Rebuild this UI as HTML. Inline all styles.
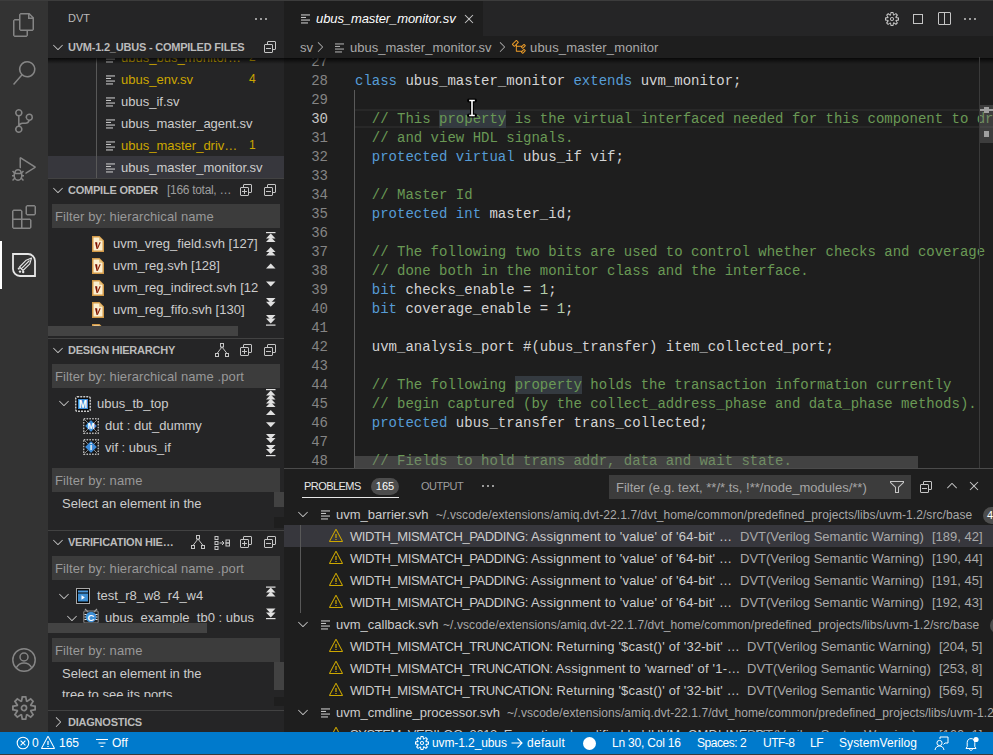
<!DOCTYPE html><html><head><meta charset="utf-8"><style>
html,body{margin:0;padding:0;width:993px;height:755px;overflow:hidden;background:#1e1e1e;}
.t{position:absolute;white-space:pre;font-family:"Liberation Sans",sans-serif;}
.b{position:absolute;}
.i{position:absolute;display:block;}
.clip{position:absolute;overflow:hidden;}
.code{position:absolute;white-space:pre;font-family:"Liberation Mono",monospace;font-size:14px;line-height:19px;height:19px;color:#d4d4d4;}
.cl{position:absolute;top:2px;left:0;white-space:pre;}
.k{color:#569cd6}.c{color:#6a9955}.n{color:#b5cea8}
</style></head><body>
<div class="b" style="left:0px;top:0px;width:993px;height:755px;background:#1e1e1e;"></div>
<div class="b" style="left:0px;top:1px;width:48px;height:731px;background:#333333;"></div>
<div class="b" style="left:48px;top:1px;width:236px;height:731px;background:#252526;"></div>
<div class="b" style="left:0px;top:0px;width:993px;height:1px;background:#3c3c3c;"></div>
<div class="b" style="left:0px;top:732px;width:993px;height:22px;background:#007acc;"></div>
<div class="b" style="left:0px;top:754px;width:993px;height:1px;background:#3a3a3a;"></div>
<svg class="i" style="left:12px;top:13px;" width="24" height="24" viewBox="0 0 24 24"><path fill="#858585" fill-rule="evenodd" d="M17.5 0h-9L7 1.5V6H2.5L1 7.5v15.07L2.5 24h12.07L16 22.57V18h4.7l1.3-1.43V4.5L17.5 0zm0 2.12l2.38 2.38H17.5V2.12zm-3 20.38h-12v-15H7v9.07L8.5 18h6v4.5zm6-6h-12v-15H16V6h4.5v10.5z"/></svg>
<svg class="i" style="left:12px;top:61px;" width="24" height="24" viewBox="0 0 24 24"><path fill="#858585" fill-rule="evenodd" d="M15.25 0a8.25 8.25 0 0 0-6.18 13.72L1 22.88l1.12 1 8.05-9.12A8.251 8.251 0 1 0 15.25.01V0zm0 15a6.75 6.75 0 1 1 0-13.5 6.75 6.75 0 0 1 0 13.5z"/></svg>
<svg class="i" style="left:12px;top:109px;" width="24" height="24" viewBox="0 0 24 24"><path fill="#858585" fill-rule="evenodd" d="M21.007 8.222A3.738 3.738 0 0 0 15.045 5.2a3.737 3.737 0 0 0 1.156 6.583 2.988 2.988 0 0 1-2.668 1.67h-2.99a4.456 4.456 0 0 0-2.989 1.165V7.4a3.737 3.737 0 1 0-1.494 0v9.117a3.776 3.776 0 1 0 1.816.099 2.99 2.99 0 0 1 2.668-1.667h2.99a4.484 4.484 0 0 0 4.223-3.039 3.736 3.736 0 0 0 3.25-3.687zM4.565 3.738a2.242 2.242 0 1 1 4.484 0 2.242 2.242 0 0 1-4.484 0zm4.484 16.441a2.242 2.242 0 1 1-4.484 0 2.242 2.242 0 0 1 4.484 0zm8.221-9.715a2.242 2.242 0 1 1 0-4.485 2.242 2.242 0 0 1 0 4.485z"/></svg>
<svg class="i" style="left:12px;top:157px;" width="24" height="24" viewBox="0 0 24 24"><path fill="#858585" fill-rule="evenodd" d="M10.94 13.5l-1.32 1.32a3.73 3.73 0 0 0-7.24 0L1.06 13.5 0 14.56l1.72 1.72-.22.22V18H0v1.5h1.5v.08c.077.489.214.966.41 1.42L0 22.94 1.06 24l1.65-1.65A4.308 4.308 0 0 0 6 24a4.31 4.31 0 0 0 3.29-1.65L10.94 24 12 22.94 10.09 21c.198-.464.336-.951.41-1.45v-.1H12V18h-1.5v-1.5l-.22-.22L12 14.56l-1.06-1.06zM6 13.5a2.25 2.25 0 0 1 2.25 2.25h-4.5A2.25 2.25 0 0 1 6 13.5zm3 6a3.33 3.33 0 0 1-3 3 3.33 3.33 0 0 1-3-3v-2.25h6v2.25zm14.76-9.9v1.26L13.5 17.37V15.6l8.5-5.37L9 2v9.46a5.07 5.07 0 0 0-1.5-.72V.63L8.64 0l15.12 9.6z"/></svg>
<svg class="i" style="left:12px;top:205px;" width="24" height="24" viewBox="0 0 24 24"><path fill="#858585" fill-rule="evenodd" d="M13.5 1.5L15 0h7.5L24 1.5V9l-1.5 1.5H15L13.5 9V1.5zm1.5 0V9h7.5V1.5H15zM0 15V6l1.5-1.5H9L10.5 6v7.5H18l1.5 1.5v7.5L18 24H1.5L0 22.5V15zm9-1.5V6H1.5v7.5H9zM9 15H1.5v7.5H9V15zm1.5 7.5H18V15h-7.5v7.5z"/></svg>
<div class="b" style="left:0px;top:241px;width:2px;height:48px;background:#ffffff;"></div>
<svg class="i" style="left:12px;top:253px;" width="24" height="24" viewBox="0 0 24 24"><path d="M1 1 H16 A7 7 0 0 1 23 8 V23 H8 A7 7 0 0 1 1 16 Z" fill="none" stroke="#e6e6e6" stroke-width="1.8"/><path d="M19.5 5 L17.8 10.8 L11 17.5 L7.5 14 L14.2 7.2 Z M17.5 7.5 L9.2 15.8" fill="none" stroke="#e6e6e6" stroke-width="1.1" stroke-linejoin="round"/><circle cx="6.8" cy="15.6" r="1.1" fill="#e6e6e6"/><circle cx="8" cy="18.6" r="1.2" fill="#e6e6e6"/><circle cx="11.2" cy="19" r="1.2" fill="#e6e6e6"/></svg>
<svg class="i" style="left:12px;top:648px;" width="24" height="24" viewBox="0 0 24 24"><circle cx="12" cy="12" r="11.2" fill="none" stroke="#858585" stroke-width="1.5"/><circle cx="12" cy="9" r="4" fill="none" stroke="#858585" stroke-width="1.5"/><path d="M4.2 19.8 C6 16.5 8.8 15 12 15 C15.2 15 18 16.5 19.8 19.8" fill="none" stroke="#858585" stroke-width="1.5"/></svg>
<svg class="i" style="left:12px;top:696px;" width="24" height="24" viewBox="0 0 24 24"><path fill="#858585" fill-rule="evenodd" d="M19.85 8.75l4.15.83v4.84l-4.15.83 2.35 3.52-3.43 3.43-3.52-2.35-.83 4.15H9.58l-.83-4.150-3.52 2.35-3.43-3.43 2.35-3.52L0 14.42V9.58l4.15-.83L1.8 5.23 5.23 1.8l3.52 2.35L9.58 0h4.84l.83 4.15 3.52-2.35 3.43 3.43-2.35 3.52zm-1.57 5.07l4-.81v-2l-4-.81-.54-1.3 2.290-3.43-1.43-1.43-3.43 2.29-1.3-.54-.81-4h-2l-.81 4-1.3.54-3.43-2.29-1.43 1.43L6.38 8.9l-.54 1.3-4 .81v2l4 .81.54 1.3-2.29 3.43 1.43 1.43 3.43-2.29 1.3.54.81 4h2l.81-4 1.3-.54 3.43 2.29 1.43-1.43-2.29-3.43.54-1.3zm-8.186-4.672A3.43 3.43 0 0 1 12 8.57 3.44 3.44 0 0 1 15.43 12a3.43 3.43 0 1 1-5.336-2.852zm.956 4.274c.281.188.612.288.95.288A1.7 1.7 0 0 0 13.71 12a1.71 1.71 0 1 0-2.66 1.422z"/></svg>
<div class="t" style="left:68px;top:7px;height:22px;line-height:22px;font-size:11px;color:#bbbbbb;">DVT</div>
<svg class="i" style="left:253px;top:11px;" width="16" height="16" viewBox="0 0 16 16"><path fill="#c5c5c5" fill-rule="evenodd" d="M4 8a1 1 0 1 1-2 0 1 1 0 0 1 2 0zm5 0a1 1 0 1 1-2 0 1 1 0 0 1 2 0zm5 0a1 1 0 1 1-2 0 1 1 0 0 1 2 0z"/></svg>
<div class="clip" style="left:48px;top:58px;width:236px;height:120px;">
<svg class="i" style="left:58px;top:-5px" width="10" height="10" viewBox="0 0 10 10"><rect x="0" y="0.4" width="9" height="1.1" fill="#c5c5c5"/><rect x="0" y="2.9" width="5" height="1.1" fill="#c5c5c5"/><rect x="0" y="5.5" width="9" height="1.1" fill="#c5c5c5"/><rect x="0" y="8.4" width="7" height="1.1" fill="#c5c5c5"/></svg>
<div class="t" style="left:73px;top:-11px;line-height:22px;font-size:13px;color:#cca700">ubus_bus_monitor…</div>
<div class="t" style="left:201px;top:-12px;line-height:22px;font-size:12px;color:#cca700">2</div>
<svg class="i" style="left:58px;top:17px" width="10" height="10" viewBox="0 0 10 10"><rect x="0" y="0.4" width="9" height="1.1" fill="#c5c5c5"/><rect x="0" y="2.9" width="5" height="1.1" fill="#c5c5c5"/><rect x="0" y="5.5" width="9" height="1.1" fill="#c5c5c5"/><rect x="0" y="8.4" width="7" height="1.1" fill="#c5c5c5"/></svg>
<div class="t" style="left:73px;top:11px;line-height:22px;font-size:13px;color:#cca700">ubus_env.sv</div>
<div class="t" style="left:201px;top:10px;line-height:22px;font-size:12px;color:#cca700">4</div>
<svg class="i" style="left:58px;top:39px" width="10" height="10" viewBox="0 0 10 10"><rect x="0" y="0.4" width="9" height="1.1" fill="#c5c5c5"/><rect x="0" y="2.9" width="5" height="1.1" fill="#c5c5c5"/><rect x="0" y="5.5" width="9" height="1.1" fill="#c5c5c5"/><rect x="0" y="8.4" width="7" height="1.1" fill="#c5c5c5"/></svg>
<div class="t" style="left:73px;top:33px;line-height:22px;font-size:13px;color:#cccccc">ubus_if.sv</div>
<svg class="i" style="left:58px;top:61px" width="10" height="10" viewBox="0 0 10 10"><rect x="0" y="0.4" width="9" height="1.1" fill="#c5c5c5"/><rect x="0" y="2.9" width="5" height="1.1" fill="#c5c5c5"/><rect x="0" y="5.5" width="9" height="1.1" fill="#c5c5c5"/><rect x="0" y="8.4" width="7" height="1.1" fill="#c5c5c5"/></svg>
<div class="t" style="left:73px;top:55px;line-height:22px;font-size:13px;color:#cccccc">ubus_master_agent.sv</div>
<svg class="i" style="left:58px;top:83px" width="10" height="10" viewBox="0 0 10 10"><rect x="0" y="0.4" width="9" height="1.1" fill="#c5c5c5"/><rect x="0" y="2.9" width="5" height="1.1" fill="#c5c5c5"/><rect x="0" y="5.5" width="9" height="1.1" fill="#c5c5c5"/><rect x="0" y="8.4" width="7" height="1.1" fill="#c5c5c5"/></svg>
<div class="t" style="left:73px;top:77px;line-height:22px;font-size:13px;color:#cca700">ubus_master_driv…</div>
<div class="t" style="left:201px;top:76px;line-height:22px;font-size:12px;color:#cca700">1</div>
<div class="b" style="left:0px;top:98px;width:236px;height:22px;background:#37373d"></div>
<svg class="i" style="left:58px;top:105px" width="10" height="10" viewBox="0 0 10 10"><rect x="0" y="0.4" width="9" height="1.1" fill="#c5c5c5"/><rect x="0" y="2.9" width="5" height="1.1" fill="#c5c5c5"/><rect x="0" y="5.5" width="9" height="1.1" fill="#c5c5c5"/><rect x="0" y="8.4" width="7" height="1.1" fill="#c5c5c5"/></svg>
<div class="t" style="left:73px;top:99px;line-height:22px;font-size:13px;color:#cccccc">ubus_master_monitor.sv</div>
<div class="b" style="left:48px;top:0px;width:1px;height:120px;background:#585858"></div>
</div>
<svg class="i" style="left:50px;top:39px;" width="16" height="16" viewBox="0 0 16 16"><path fill="#c5c5c5" fill-rule="evenodd" d="M7.976 10.072l4.357-4.357.62.618L8.284 11h-.618L3 6.333l.619-.618 4.357 4.357z"/></svg>
<div class="t" style="left:68px;top:36px;height:22px;line-height:22px;font-size:11px;color:#bbbbbb;font-weight:bold;letter-spacing:-0.22px;">UVM-1.2_UBUS - COMPILED FILES</div>
<svg class="i" style="left:262px;top:39px;" width="16" height="16" viewBox="0 0 16 16"><path fill="#c5c5c5" fill-rule="evenodd" d="M9 9H4v1h5V9z M5 3l1-1h7l1 1v7l-1 1h-2v2l-1 1H3l-1-1V6l1-1h2V3zm1 2h4l1 1v4h2V3H6v2zm4 1H3v7h7V6z"/></svg>
<div class="b" style="left:48px;top:58px;width:236px;height:6px;background:linear-gradient(#000000bb,#00000000);"></div>
<div class="b" style="left:48px;top:178px;width:236px;height:1px;background:#424242;"></div>
<svg class="i" style="left:50px;top:182px;" width="16" height="16" viewBox="0 0 16 16"><path fill="#c5c5c5" fill-rule="evenodd" d="M7.976 10.072l4.357-4.357.62.618L8.284 11h-.618L3 6.333l.619-.618 4.357 4.357z"/></svg>
<div class="t" style="left:68px;top:179px;height:22px;line-height:22px;font-size:11px;color:#bbbbbb;font-weight:bold;letter-spacing:-0.22px;">COMPILE ORDER</div>
<svg class="i" style="left:238px;top:182px;" width="16" height="16" viewBox="0 0 16 16"><path fill="#c5c5c5" fill-rule="evenodd" d="M4 9h2V7h1v2h2v1H7v2H6v-2H4V9z M5 3l1-1h7l1 1v7l-1 1h-2v2l-1 1H3l-1-1V6l1-1h2V3zm1 2h4l1 1v4h2V3H6v2zm4 1H3v7h7V6z"/></svg>
<svg class="i" style="left:262px;top:182px;" width="16" height="16" viewBox="0 0 16 16"><path fill="#c5c5c5" fill-rule="evenodd" d="M9 9H4v1h5V9z M5 3l1-1h7l1 1v7l-1 1h-2v2l-1 1H3l-1-1V6l1-1h2V3zm1 2h4l1 1v4h2V3H6v2zm4 1H3v7h7V6z"/></svg>
<div class="t" style="left:167px;top:179px;height:22px;line-height:22px;font-size:12px;color:#9d9d9d;letter-spacing:-0.3px;">[166 total, …</div>
<div class="b" style="left:52px;top:204px;width:228px;height:24px;background:#3c3c3c;"></div>
<div class="t" style="left:55px;top:205px;line-height:24px;font-size:13px;letter-spacing:0.1px;color:#999999">Filter by: hierarchical name</div>
<div class="clip" style="left:48px;top:228px;width:214px;height:99px;">
<svg class="i" style="left:43.5px;top:7.5px" width="12" height="16" viewBox="0 0 12 16"><path d="M0.75 0.75 H7.2 L11.25 4.8 V15.25 H0.75 Z" fill="#fbefd0" stroke="#d39a48" stroke-width="1.5"/><path d="M7.2 0.75 V4.8 H11.25 Z" fill="#e6c07a"/><path d="M3 6.2 H5.2 L5.6 13 H4.6 Z" fill="#7a1000"/><path d="M8.2 6.2 L5.4 12.6" stroke="#8a1a00" stroke-width="1.1"/></svg>
<div class="t" style="left:65px;top:5px;line-height:22px;font-size:13px;color:#cccccc">uvm_vreg_field.svh [127]</div>
<svg class="i" style="left:43.5px;top:29.5px" width="12" height="16" viewBox="0 0 12 16"><path d="M0.75 0.75 H7.2 L11.25 4.8 V15.25 H0.75 Z" fill="#fbefd0" stroke="#d39a48" stroke-width="1.5"/><path d="M7.2 0.75 V4.8 H11.25 Z" fill="#e6c07a"/><path d="M3 6.2 H5.2 L5.6 13 H4.6 Z" fill="#7a1000"/><path d="M8.2 6.2 L5.4 12.6" stroke="#8a1a00" stroke-width="1.1"/></svg>
<div class="t" style="left:65px;top:27px;line-height:22px;font-size:13px;color:#cccccc">uvm_reg.svh [128]</div>
<svg class="i" style="left:43.5px;top:51.5px" width="12" height="16" viewBox="0 0 12 16"><path d="M0.75 0.75 H7.2 L11.25 4.8 V15.25 H0.75 Z" fill="#fbefd0" stroke="#d39a48" stroke-width="1.5"/><path d="M7.2 0.75 V4.8 H11.25 Z" fill="#e6c07a"/><path d="M3 6.2 H5.2 L5.6 13 H4.6 Z" fill="#7a1000"/><path d="M8.2 6.2 L5.4 12.6" stroke="#8a1a00" stroke-width="1.1"/></svg>
<div class="t" style="left:65px;top:49px;line-height:22px;font-size:13px;color:#cccccc">uvm_reg_indirect.svh [12</div>
<svg class="i" style="left:43.5px;top:73.5px" width="12" height="16" viewBox="0 0 12 16"><path d="M0.75 0.75 H7.2 L11.25 4.8 V15.25 H0.75 Z" fill="#fbefd0" stroke="#d39a48" stroke-width="1.5"/><path d="M7.2 0.75 V4.8 H11.25 Z" fill="#e6c07a"/><path d="M3 6.2 H5.2 L5.6 13 H4.6 Z" fill="#7a1000"/><path d="M8.2 6.2 L5.4 12.6" stroke="#8a1a00" stroke-width="1.1"/></svg>
<div class="t" style="left:65px;top:71px;line-height:22px;font-size:13px;color:#cccccc">uvm_reg_fifo.svh [130]</div>
<svg class="i" style="left:43.5px;top:95.5px" width="12" height="16" viewBox="0 0 12 16"><path d="M0.75 0.75 H7.2 L11.25 4.8 V15.25 H0.75 Z" fill="#fbefd0" stroke="#d39a48" stroke-width="1.5"/><path d="M7.2 0.75 V4.8 H11.25 Z" fill="#e6c07a"/><path d="M3 6.2 H5.2 L5.6 13 H4.6 Z" fill="#7a1000"/><path d="M8.2 6.2 L5.4 12.6" stroke="#8a1a00" stroke-width="1.1"/></svg>
<div class="t" style="left:65px;top:93px;line-height:22px;font-size:13px;color:#cccccc">uvm_reg_file.svh [131]</div>
</div>
<svg class="i" style="left:0;top:0" width="993" height="755" viewBox="0 0 993 755"><rect x="266" y="232" width="9.5" height="1.2" fill="#e0e0e0"/><path d="M270.75 233.5 L275.5 238.5 H266 Z" fill="#e0e0e0"/><path d="M270.75 237 L275.5 242 H266 Z" fill="#e0e0e0"/><path d="M270.75 247 L275.5 252 H266 Z" fill="#e0e0e0"/><path d="M270.75 250.5 L275.5 255.5 H266 Z" fill="#e0e0e0"/><path d="M270.75 263.5 L275.5 268.5 H266 Z" fill="#e0e0e0"/><path d="M266 281.5 H275.5 L270.75 286.5 Z" fill="#e0e0e0"/><path d="M266 298 H275.5 L270.75 303 Z" fill="#e0e0e0"/><path d="M266 301.8 H275.5 L270.75 306.8 Z" fill="#e0e0e0"/><path d="M266 315 H275.5 L270.75 320 Z" fill="#e0e0e0"/><path d="M266 318.5 H275.5 L270.75 323.5 Z" fill="#e0e0e0"/><rect x="266" y="324.5" width="9.5" height="1.2" fill="#e0e0e0"/></svg>
<div class="b" style="left:48px;top:326px;width:190px;height:10px;background:#434343;"></div>
<div class="b" style="left:48px;top:338px;width:236px;height:1px;background:#424242;"></div>
<svg class="i" style="left:50px;top:342px;" width="16" height="16" viewBox="0 0 16 16"><path fill="#c5c5c5" fill-rule="evenodd" d="M7.976 10.072l4.357-4.357.62.618L8.284 11h-.618L3 6.333l.619-.618 4.357 4.357z"/></svg>
<div class="t" style="left:68px;top:339px;height:22px;line-height:22px;font-size:11px;color:#bbbbbb;font-weight:bold;letter-spacing:-0.22px;">DESIGN HIERARCHY</div>
<svg class="i" style="left:238px;top:342px;" width="16" height="16" viewBox="0 0 16 16"><path fill="#c5c5c5" fill-rule="evenodd" d="M4 9h2V7h1v2h2v1H7v2H6v-2H4V9z M5 3l1-1h7l1 1v7l-1 1h-2v2l-1 1H3l-1-1V6l1-1h2V3zm1 2h4l1 1v4h2V3H6v2zm4 1H3v7h7V6z"/></svg>
<svg class="i" style="left:262px;top:342px;" width="16" height="16" viewBox="0 0 16 16"><path fill="#c5c5c5" fill-rule="evenodd" d="M9 9H4v1h5V9z M5 3l1-1h7l1 1v7l-1 1h-2v2l-1 1H3l-1-1V6l1-1h2V3zm1 2h4l1 1v4h2V3H6v2zm4 1H3v7h7V6z"/></svg>
<svg class="i" style="left:214px;top:343px" width="16" height="16" viewBox="0 0 16 16"><rect x="6.5" y="0.5" width="3" height="3.5" fill="none" stroke="#c5c5c5" stroke-width="1"/><rect x="1.5" y="10.5" width="3" height="3" fill="none" stroke="#c5c5c5" stroke-width="1"/><rect x="11.5" y="10.5" width="3" height="3" fill="none" stroke="#c5c5c5" stroke-width="1"/><path d="M8 4 L3 10.5 M8 4 L13 10.5" stroke="#c5c5c5" stroke-width="1"/></svg>
<div class="b" style="left:52px;top:364px;width:228px;height:24px;background:#3c3c3c;"></div>
<div class="t" style="left:55px;top:365px;line-height:24px;font-size:13px;letter-spacing:0.1px;color:#999999">Filter by: hierarchical name .port</div>
<svg class="i" style="left:56px;top:395px;" width="16" height="16" viewBox="0 0 16 16"><path fill="#c5c5c5" fill-rule="evenodd" d="M7.976 10.072l4.357-4.357.62.618L8.284 11h-.618L3 6.333l.619-.618 4.357 4.357z"/></svg>
<svg class="i" style="left:75px;top:396px" width="16" height="16" viewBox="0 0 16 16"><rect x="0.75" y="0.75" width="14.5" height="14.5" rx="1.5" fill="#101010" stroke="#c8c8c8" stroke-width="1.5" stroke-dasharray="2 1"/><rect x="2.5" y="2.5" width="11" height="11" fill="#000"/><rect x="3" y="3" width="10" height="10" fill="#3d8ad6"/><text x="8" y="12" font-family="Liberation Sans" font-weight="bold" font-size="10" fill="#fff" text-anchor="middle">M</text></svg>
<div class="t" style="left:97px;top:393px;height:22px;line-height:22px;font-size:13px;color:#cccccc;">ubus_tb_top</div>
<svg class="i" style="left:83px;top:418px" width="16" height="16" viewBox="0 0 16 16"><rect x="0.75" y="0.75" width="14.5" height="14.5" fill="#151515" stroke="#b8b8b8" stroke-width="1.4" stroke-dasharray="1.6 1.2"/><path d="M2 2 L14 14 M14 2 L2 14" stroke="#8a8a8a" stroke-width="1"/><path d="M8 1.8 L14.2 8 L8 14.2 L1.8 8 Z" fill="#3d8ad6" stroke="#1a1a1a" stroke-width="0.6"/><text x="8" y="11.3" font-family="Liberation Sans" font-weight="bold" font-size="8.5" fill="#fff" text-anchor="middle">M</text></svg>
<div class="t" style="left:105px;top:415px;height:22px;line-height:22px;font-size:13px;color:#cccccc;">dut : dut_dummy</div>
<svg class="i" style="left:83px;top:439px" width="16" height="16" viewBox="0 0 16 16"><rect x="0.75" y="0.75" width="14.5" height="14.5" fill="#151515" stroke="#b8b8b8" stroke-width="1.4" stroke-dasharray="1.6 1.2"/><path d="M2 2 L14 14 M14 2 L2 14" stroke="#8a8a8a" stroke-width="1"/><path d="M8 1.8 L14.2 8 L8 14.2 L1.8 8 Z" fill="#3d8ad6" stroke="#1a1a1a" stroke-width="0.6"/><text x="8" y="11.3" font-family="Liberation Sans" font-weight="bold" font-size="8.5" fill="#fff" text-anchor="middle">i</text></svg>
<div class="t" style="left:105px;top:437px;height:22px;line-height:22px;font-size:13px;color:#cccccc;">vif : ubus_if</div>
<svg class="i" style="left:0;top:0" width="993" height="755" viewBox="0 0 993 755"><rect x="266" y="389" width="9.5" height="1.2" fill="#e0e0e0"/><path d="M270.75 390.5 L275.5 395.5 H266 Z" fill="#e0e0e0"/><path d="M270.75 394.5 L275.5 399.5 H266 Z" fill="#e0e0e0"/><path d="M270.75 398.5 L275.5 403.5 H266 Z" fill="#e0e0e0"/><path d="M270.75 402 L275.5 407 H266 Z" fill="#e0e0e0"/><path d="M270.75 410 L275.5 415 H266 Z" fill="#e0e0e0"/><path d="M266 422.2 H275.5 L270.75 427.2 Z" fill="#e0e0e0"/><path d="M266 434 H275.5 L270.75 439 Z" fill="#e0e0e0"/><path d="M266 438 H275.5 L270.75 443 Z" fill="#e0e0e0"/><path d="M266 445 H275.5 L270.75 450 Z" fill="#e0e0e0"/><path d="M266 449 H275.5 L270.75 454 Z" fill="#e0e0e0"/><rect x="266" y="455" width="9.5" height="1.2" fill="#e0e0e0"/></svg>
<div class="b" style="left:52px;top:468px;width:228px;height:24px;background:#3c3c3c;"></div>
<div class="t" style="left:55px;top:469px;line-height:24px;font-size:13px;letter-spacing:0.1px;color:#999999">Filter by: name</div>
<div class="clip" style="left:48px;top:492px;width:226px;height:24px;">
<div class="t" style="left:14px;top:1px;height:22px;line-height:22px;font-size:13px;color:#cccccc;">Select an element in the</div>
<div class="t" style="left:14px;top:23px;height:23px;line-height:23px;font-size:13px;color:#cccccc;">tree to see its ports</div>
</div>
<div class="b" style="left:274px;top:492px;width:10px;height:15px;background:#424242;"></div>
<div class="b" style="left:274px;top:517px;width:10px;height:11px;background:#1e1e1e;"></div>
<div class="b" style="left:48px;top:530px;width:236px;height:1px;background:#424242;"></div>
<svg class="i" style="left:50px;top:534px;" width="16" height="16" viewBox="0 0 16 16"><path fill="#c5c5c5" fill-rule="evenodd" d="M7.976 10.072l4.357-4.357.62.618L8.284 11h-.618L3 6.333l.619-.618 4.357 4.357z"/></svg>
<div class="t" style="left:68px;top:531px;height:22px;line-height:22px;font-size:11px;color:#bbbbbb;font-weight:bold;letter-spacing:-0.22px;">VERIFICATION HIE…</div>
<svg class="i" style="left:238px;top:534px;" width="16" height="16" viewBox="0 0 16 16"><path fill="#c5c5c5" fill-rule="evenodd" d="M4 9h2V7h1v2h2v1H7v2H6v-2H4V9z M5 3l1-1h7l1 1v7l-1 1h-2v2l-1 1H3l-1-1V6l1-1h2V3zm1 2h4l1 1v4h2V3H6v2zm4 1H3v7h7V6z"/></svg>
<svg class="i" style="left:262px;top:534px;" width="16" height="16" viewBox="0 0 16 16"><path fill="#c5c5c5" fill-rule="evenodd" d="M9 9H4v1h5V9z M5 3l1-1h7l1 1v7l-1 1h-2v2l-1 1H3l-1-1V6l1-1h2V3zm1 2h4l1 1v4h2V3H6v2zm4 1H3v7h7V6z"/></svg>
<svg class="i" style="left:190px;top:535px" width="16" height="16" viewBox="0 0 16 16"><rect x="6.5" y="0.5" width="3" height="3.5" fill="none" stroke="#c5c5c5" stroke-width="1"/><rect x="1.5" y="10.5" width="3" height="3" fill="none" stroke="#c5c5c5" stroke-width="1"/><rect x="11.5" y="10.5" width="3" height="3" fill="none" stroke="#c5c5c5" stroke-width="1"/><path d="M8 4 L3 10.5 M8 4 L13 10.5" stroke="#c5c5c5" stroke-width="1"/></svg>
<svg class="i" style="left:214px;top:535px" width="17" height="16" viewBox="0 0 17 16"><rect x="1" y="1.5" width="3" height="3" fill="none" stroke="#c5c5c5"/><rect x="1" y="6.5" width="3" height="3" fill="none" stroke="#c5c5c5"/><rect x="1" y="11.5" width="3" height="3" fill="none" stroke="#c5c5c5"/><path d="M5.5 8 H10 M8 6 L10 8 L8 10" fill="none" stroke="#c5c5c5"/><rect x="12" y="5" width="3.5" height="3" fill="none" stroke="#c5c5c5"/><rect x="12" y="8" width="3.5" height="3" fill="none" stroke="#c5c5c5"/></svg>
<div class="b" style="left:52px;top:556px;width:228px;height:24px;background:#3c3c3c;"></div>
<div class="t" style="left:55px;top:557px;line-height:24px;font-size:13px;letter-spacing:0.1px;color:#999999">Filter by: hierarchical name .port</div>
<div class="clip" style="left:48px;top:580px;width:236px;height:46px;">
<svg class="i" style="left:8px;top:8px" width="16" height="16" viewBox="0 0 16 16"><path fill="#c5c5c5" d="M7.976 10.072l4.357-4.357.62.618L8.284 11h-.618L3 6.333l.619-.618 4.357 4.357z"/></svg>
<svg class="i" style="left:28px;top:8px" width="14" height="16" viewBox="0 0 14 16"><rect x="0.5" y="0.5" width="13" height="15" fill="#050505" stroke="#a8a8a8"/><rect x="2" y="2.5" width="10" height="2" fill="#4a98dc"/><rect x="2" y="5.5" width="10" height="8" fill="#3f8fd2"/><path d="M5.5 7.3 L8.8 9.5 L5.5 11.7 Z" fill="#fff"/></svg>
<div class="t" style="left:49px;top:5px;height:22px;line-height:22px;font-size:13px;color:#cccccc;">test_r8_w8_r4_w4</div>
<svg class="i" style="left:16px;top:30px" width="16" height="16" viewBox="0 0 16 16"><path fill="#c5c5c5" d="M7.976 10.072l4.357-4.357.62.618L8.284 11h-.618L3 6.333l.619-.618 4.357 4.357z"/></svg>
<svg class="i" style="left:35px;top:28px" width="16" height="16" viewBox="0 0 16 16"><path d="M2 1 L5 4 M14 1 L11 4" stroke="#a0a0a0" stroke-width="1.2"/><rect x="0.8" y="3" width="14.4" height="12" rx="1" fill="none" stroke="#8a8a8a" stroke-width="1"/><path d="M1.5 6.5 H4 M1.5 9 H4 M1.5 11.5 H4 M12 6.5 H14.5 M12 9 H14.5 M12 11.5 H14.5" stroke="#e8e8e8" stroke-width="1"/><circle cx="8" cy="9" r="5.3" fill="#3d8fd6"/><text x="8" y="12.6" font-family="Liberation Sans" font-weight="bold" font-size="9.5" fill="#fff" text-anchor="middle">C</text></svg>
<div class="t" style="left:57px;top:27px;height:22px;line-height:22px;font-size:13px;color:#cccccc;">ubus_example_tb0 : ubus</div>
</div>
<svg class="i" style="left:0;top:0" width="993" height="755" viewBox="0 0 993 755"><rect x="266" y="586.5" width="9.5" height="1.2" fill="#e0e0e0"/><path d="M270.75 587.5 L275.5 592.5 H266 Z" fill="#e0e0e0"/><path d="M270.75 591.5 L275.5 596.5 H266 Z" fill="#e0e0e0"/><path d="M266 608.5 H275.5 L270.75 613.5 Z" fill="#e0e0e0"/><path d="M266 612.5 H275.5 L270.75 617.5 Z" fill="#e0e0e0"/><rect x="266" y="618" width="9.5" height="1.2" fill="#e0e0e0"/></svg>
<div class="b" style="left:48px;top:623px;width:159px;height:10px;background:#434343;"></div>
<div class="b" style="left:52px;top:638px;width:228px;height:24px;background:#3c3c3c;"></div>
<div class="t" style="left:55px;top:639px;line-height:24px;font-size:13px;letter-spacing:0.1px;color:#999999">Filter by: name</div>
<div class="clip" style="left:48px;top:662px;width:226px;height:35px;">
<div class="t" style="left:14px;top:1px;height:22px;line-height:22px;font-size:13px;color:#cccccc;">Select an element in the</div>
<div class="t" style="left:14px;top:22px;height:22px;line-height:22px;font-size:13px;color:#cccccc;">tree to see its ports</div>
</div>
<div class="b" style="left:274px;top:662px;width:10px;height:28px;background:#424242;"></div>
<div class="b" style="left:274px;top:697px;width:10px;height:9px;background:#1e1e1e;"></div>
<div class="b" style="left:48px;top:710px;width:236px;height:1px;background:#424242;"></div>
<svg class="i" style="left:50px;top:714px;" width="16" height="16" viewBox="0 0 16 16"><path fill="#c5c5c5" fill-rule="evenodd" d="M10.072 8.024L5.715 3.667l.618-.62L11 7.716v.618L6.333 13l-.618-.619 4.357-4.357z"/></svg>
<div class="t" style="left:68px;top:711px;height:22px;line-height:22px;font-size:11px;color:#bbbbbb;font-weight:bold;letter-spacing:-0.22px;">DIAGNOSTICS</div>
<div class="b" style="left:284px;top:1px;width:709px;height:35px;background:#252526;"></div>
<div class="b" style="left:284px;top:1px;width:199px;height:35px;background:#1e1e1e;"></div>
<svg class="i" style="left:301px;top:14px" width="10" height="10" viewBox="0 0 10 10"><rect x="0" y="0.4" width="9" height="1.1" fill="#c5c5c5"/><rect x="0" y="2.9" width="5" height="1.1" fill="#c5c5c5"/><rect x="0" y="5.5" width="9" height="1.1" fill="#c5c5c5"/><rect x="0" y="8.4" width="7" height="1.1" fill="#c5c5c5"/></svg>
<div class="t" style="left:316px;top:8px;height:22px;line-height:22px;font-size:13px;color:#ffffff;font-style:italic;letter-spacing:-0.1px;">ubus_master_monitor.sv</div>
<svg class="i" style="left:461px;top:11px;" width="16" height="16" viewBox="0 0 16 16"><path fill="#c5c5c5" fill-rule="evenodd" d="M8 8.707l3.646 3.647.708-.707L8.707 8l3.647-3.646-.707-.708L8 7.293 4.354 3.646l-.707.708L7.293 8l-3.646 3.646.707.708L8 8.707z"/></svg>
<svg class="i" style="left:884px;top:11px;" width="16" height="16" viewBox="0 0 16 16"><path fill="#c5c5c5" fill-rule="evenodd" d="M9.1 4.4L8.6 2H7.4l-.5 2.4-.7.3-2-1.3-.9.8 1.3 2-.2.7-2.4.5v1.2l2.4.5.3.8-1.3 2 .8.8 2-1.3.8.3.4 2.3h1.2l.5-2.4.8-.3 2 1.3.8-.8-1.3-2 .3-.8 2.3-.4V7.4l-2.4-.5-.3-.8 1.3-2-.8-.8-2 1.3-.7-.2zM9.4 1l.5 2.4L12 2.1l2 2-1.4 2.1 2.4.4v2.8l-2.4.5L14 12l-2 2-2.1-1.4-.5 2.4H6.6l-.5-2.4L4 13.9l-2-2 1.4-2.1L1 9.4V6.6l2.4-.5L2.1 4l2-2 2.1 1.4.4-2.4h2.8zm.6 7c0 1.1-.9 2-2 2s-2-.9-2-2 .9-2 2-2 2 .9 2 2zM8 9c.6 0 1-.4 1-1s-.4-1-1-1-1 .4-1 1 .4 1 1 1z"/></svg>
<svg class="i" style="left:910px;top:11px" width="16" height="16" viewBox="0 0 16 16"><rect x="3.5" y="3.5" width="9" height="9" fill="none" stroke="#c5c5c5" stroke-width="1"/></svg>
<svg class="i" style="left:936px;top:11px;" width="16" height="16" viewBox="0 0 16 16"><path fill="#c5c5c5" fill-rule="evenodd" d="M14 1H3L2 2v11l1 1h11l1-1V2l-1-1zM8 13H3V2h5v11zm6 0H9V2h5v11z"/></svg>
<svg class="i" style="left:962px;top:11px;" width="16" height="16" viewBox="0 0 16 16"><path fill="#c5c5c5" fill-rule="evenodd" d="M4 8a1 1 0 1 1-2 0 1 1 0 0 1 2 0zm5 0a1 1 0 1 1-2 0 1 1 0 0 1 2 0zm5 0a1 1 0 1 1-2 0 1 1 0 0 1 2 0z"/></svg>
<div class="b" style="left:284px;top:36px;width:709px;height:22px;background:#1e1e1e;"></div>
<div class="t" style="left:300px;top:37px;height:22px;line-height:22px;font-size:13px;color:#a9a9a9;">sv</div>
<svg class="i" style="left:312px;top:39px;" width="16" height="16" viewBox="0 0 16 16"><path fill="#a9a9a9" fill-rule="evenodd" d="M10.072 8.024L5.715 3.667l.618-.62L11 7.716v.618L6.333 13l-.618-.619 4.357-4.357z"/></svg>
<svg class="i" style="left:335px;top:43px" width="10" height="10" viewBox="0 0 10 10"><rect x="0" y="0.4" width="9" height="1.1" fill="#a9a9a9"/><rect x="0" y="2.9" width="5" height="1.1" fill="#a9a9a9"/><rect x="0" y="5.5" width="9" height="1.1" fill="#a9a9a9"/><rect x="0" y="8.4" width="7" height="1.1" fill="#a9a9a9"/></svg>
<div class="t" style="left:350px;top:37px;height:22px;line-height:22px;font-size:13px;color:#a9a9a9;">ubus_master_monitor.sv</div>
<svg class="i" style="left:494px;top:39px;" width="16" height="16" viewBox="0 0 16 16"><path fill="#a9a9a9" fill-rule="evenodd" d="M10.072 8.024L5.715 3.667l.618-.62L11 7.716v.618L6.333 13l-.618-.619 4.357-4.357z"/></svg>
<svg class="i" style="left:511px;top:39px;" width="16" height="15" viewBox="0 0 16 15"><path fill="#ee9d28" fill-rule="evenodd" d="M11.34 9.71h.71l2.67-2.67v-.71L13.38 5h-.7l-1.82 1.81h-5V5.56l1.86-1.85V3l-2-2H5L1 5v.71l2 2h.71l1.14-1.15v5.79l.5.5H10v.52l1.33 1.34h.71l2.67-2.67v-.71L13.37 10h-.7l-1.860 1.85h-5v-4H10v.48l1.34 1.38zm1.69-3.65l.63.63-2 2-.63-.63 2-2zm0 5l.63.63-2 2-.63-.63 2-2zM3.35 6.65L2.06 5.29l3.29-3.29 1.29 1.29-3.29 3.36z"/></svg>
<div class="t" style="left:530px;top:37px;height:22px;line-height:22px;font-size:13px;color:#a9a9a9;letter-spacing:0.15px;">ubus_master_monitor</div>
<div class="clip" style="left:284px;top:58px;width:709px;height:410px;">
<div class="b" style="left:71px;top:51px;width:638px;height:19px;box-sizing:border-box;border-top:2px solid #282828;border-bottom:2px solid #282828"></div>
<div class="b" style="left:155.0px;top:52px;width:67.2px;height:18px;background:#343a40"></div>
<div class="b" style="left:230.6px;top:318px;width:67.2px;height:18px;background:#343a40"></div>
<div class="b" style="left:70px;top:32px;width:1px;height:378px;background:#5a5a5a"></div>
<div class="code" style="left:0px;width:44px;top:-5px;text-align:right;color:#858585">27</div>
<div class="code" style="left:71px;top:-5px"></div>
<div class="code" style="left:0px;width:44px;top:14px;text-align:right;color:#858585">28</div>
<div class="code" style="left:71px;top:14px"><span class="k">class</span> ubus_master_monitor <span class="k">extends</span> uvm_monitor;</div>
<div class="code" style="left:0px;width:44px;top:33px;text-align:right;color:#858585">29</div>
<div class="code" style="left:71px;top:33px"></div>
<div class="code" style="left:0px;width:44px;top:52px;text-align:right;color:#c6c6c6">30</div>
<div class="code" style="left:71px;top:52px">  <span class="c">// This property is the virtual interfaced needed for this component to drive</span></div>
<div class="code" style="left:0px;width:44px;top:71px;text-align:right;color:#858585">31</div>
<div class="code" style="left:71px;top:71px">  <span class="c">// and view HDL signals.</span></div>
<div class="code" style="left:0px;width:44px;top:90px;text-align:right;color:#858585">32</div>
<div class="code" style="left:71px;top:90px">  <span class="k">protected</span> <span class="k">virtual</span> ubus_if vif;</div>
<div class="code" style="left:0px;width:44px;top:109px;text-align:right;color:#858585">33</div>
<div class="code" style="left:71px;top:109px"></div>
<div class="code" style="left:0px;width:44px;top:128px;text-align:right;color:#858585">34</div>
<div class="code" style="left:71px;top:128px">  <span class="c">// Master Id</span></div>
<div class="code" style="left:0px;width:44px;top:147px;text-align:right;color:#858585">35</div>
<div class="code" style="left:71px;top:147px">  <span class="k">protected</span> <span class="k">int</span> master_id;</div>
<div class="code" style="left:0px;width:44px;top:166px;text-align:right;color:#858585">36</div>
<div class="code" style="left:71px;top:166px"></div>
<div class="code" style="left:0px;width:44px;top:185px;text-align:right;color:#858585">37</div>
<div class="code" style="left:71px;top:185px">  <span class="c">// The following two bits are used to control whether checks and coverage are</span></div>
<div class="code" style="left:0px;width:44px;top:204px;text-align:right;color:#858585">38</div>
<div class="code" style="left:71px;top:204px">  <span class="c">// done both in the monitor class and the interface.</span></div>
<div class="code" style="left:0px;width:44px;top:223px;text-align:right;color:#858585">39</div>
<div class="code" style="left:71px;top:223px">  <span class="k">bit</span> checks_enable = <span class="n">1</span>;</div>
<div class="code" style="left:0px;width:44px;top:242px;text-align:right;color:#858585">40</div>
<div class="code" style="left:71px;top:242px">  <span class="k">bit</span> coverage_enable = <span class="n">1</span>;</div>
<div class="code" style="left:0px;width:44px;top:261px;text-align:right;color:#858585">41</div>
<div class="code" style="left:71px;top:261px"></div>
<div class="code" style="left:0px;width:44px;top:280px;text-align:right;color:#858585">42</div>
<div class="code" style="left:71px;top:280px">  uvm_analysis_port #(ubus_transfer) item_collected_port;</div>
<div class="code" style="left:0px;width:44px;top:299px;text-align:right;color:#858585">43</div>
<div class="code" style="left:71px;top:299px"></div>
<div class="code" style="left:0px;width:44px;top:318px;text-align:right;color:#858585">44</div>
<div class="code" style="left:71px;top:318px">  <span class="c">// The following property holds the transaction information currently</span></div>
<div class="code" style="left:0px;width:44px;top:337px;text-align:right;color:#858585">45</div>
<div class="code" style="left:71px;top:337px">  <span class="c">// begin captured (by the collect_address_phase and data_phase methods).</span></div>
<div class="code" style="left:0px;width:44px;top:356px;text-align:right;color:#858585">46</div>
<div class="code" style="left:71px;top:356px">  <span class="k">protected</span> ubus_transfer trans_collected;</div>
<div class="code" style="left:0px;width:44px;top:375px;text-align:right;color:#858585">47</div>
<div class="code" style="left:71px;top:375px"></div>
<div class="code" style="left:0px;width:44px;top:394px;text-align:right;color:#858585">48</div>
<div class="code" style="left:71px;top:394px">  <span class="c">// Fields to hold trans addr, data and wait state.</span></div>
</div>
<div class="b" style="left:284px;top:58px;width:709px;height:6px;background:linear-gradient(#000000bb,#00000000);"></div>
<div class="b" style="left:979px;top:57px;width:1px;height:411px;background:#3a3a3a;"></div>
<div class="b" style="left:980px;top:105px;width:13px;height:38px;background:rgba(121,121,121,0.35);"></div>
<div class="b" style="left:980px;top:109px;width:13px;height:2px;background:#a0a0a0;"></div>
<div class="b" style="left:984px;top:107px;width:5px;height:6px;background:#a0a0a0;"></div>
<div class="b" style="left:984px;top:131px;width:5px;height:6px;background:#a0a0a0;"></div>
<div class="b" style="left:355px;top:456px;width:563px;height:12px;background:rgba(121,121,121,0.4);"></div>
<svg class="i" style="left:466px;top:97px" width="12" height="22" viewBox="0 0 12 22"><path d="M3 3.5 H9 M6 3.5 V18.5 M3 18.5 H9" stroke="#000" stroke-width="4" stroke-linecap="round" fill="none"/><path d="M3.2 3.5 H8.8 M6 3.5 V18.5 M3.2 18.5 H8.8" stroke="#fff" stroke-width="1.6" fill="none"/></svg>
<div class="b" style="left:284px;top:468px;width:709px;height:1px;background:#4b4b4b;"></div>
<div class="t" style="left:304px;top:475px;height:22px;line-height:22px;font-size:11px;color:#e7e7e7;letter-spacing:-0.55px;">PROBLEMS</div>
<div class="b" style="left:371px;top:478px;width:28px;height:17px;border-radius:9px;background:#4d4d4d"></div>
<div class="t" style="left:371px;top:478px;height:17px;line-height:17px;font-size:11px;color:#ffffff;width:28px;text-align:center;">165</div>
<div class="b" style="left:302px;top:497px;width:97px;height:1px;background:#e7e7e7;"></div>
<div class="t" style="left:421px;top:475px;height:22px;line-height:22px;font-size:11px;color:#9d9d9d;letter-spacing:-0.5px;">OUTPUT</div>
<svg class="i" style="left:480px;top:478px;" width="16" height="16" viewBox="0 0 16 16"><path fill="#c5c5c5" fill-rule="evenodd" d="M4 8a1 1 0 1 1-2 0 1 1 0 0 1 2 0zm5 0a1 1 0 1 1-2 0 1 1 0 0 1 2 0zm5 0a1 1 0 1 1-2 0 1 1 0 0 1 2 0z"/></svg>
<div class="b" style="left:609px;top:475px;width:302px;height:24px;background:#3c3c3c;"></div>
<div class="t" style="left:616px;top:476px;height:24px;line-height:24px;font-size:13px;color:#a6a6a6;">Filter (e.g. text, **/*.ts, !**/node_modules/**)</div>
<svg class="i" style="left:889px;top:479px;" width="16" height="16" viewBox="0 0 16 16"><path fill="#c5c5c5" fill-rule="evenodd" d="M15 2v1.67l-5 4.759V14H6V8.429l-5-4.76V2h14zM7 8v5h2V8l5-4.76V3H2v.24L7 8z"/></svg>
<svg class="i" style="left:918px;top:479px;" width="16" height="16" viewBox="0 0 16 16"><path fill="#c5c5c5" fill-rule="evenodd" d="M9 9H4v1h5V9z M5 3l1-1h7l1 1v7l-1 1h-2v2l-1 1H3l-1-1V6l1-1h2V3zm1 2h4l1 1v4h2V3H6v2zm4 1H3v7h7V6z"/></svg>
<svg class="i" style="left:944px;top:478px;" width="16" height="16" viewBox="0 0 16 16"><path fill="#c5c5c5" fill-rule="evenodd" d="M8 6.04l-4.37 4.37-.62-.62L7.69 5.1h.62l4.69 4.69-.62.62L8 6.04z"/></svg>
<svg class="i" style="left:966px;top:478px;" width="16" height="16" viewBox="0 0 16 16"><path fill="#c5c5c5" fill-rule="evenodd" d="M8 8.707l3.646 3.647.708-.707L8.707 8l3.647-3.646-.707-.708L8 7.293 4.354 3.646l-.707.708L7.293 8l-3.646 3.646.707.708L8 8.707z"/></svg>
<div class="clip" style="left:284px;top:503px;width:709px;height:229px;">
<svg class="i" style="left:11px;top:3px" width="16" height="16" viewBox="0 0 16 16"><path fill="#c5c5c5" d="M7.976 10.072l4.357-4.357.62.618L8.284 11h-.618L3 6.333l.619-.618 4.357 4.357z"/></svg>
<svg class="i" style="left:37px;top:7px" width="10" height="10" viewBox="0 0 10 10"><rect x="0" y="0.4" width="9" height="1.1" fill="#c5c5c5"/><rect x="0" y="2.9" width="5" height="1.1" fill="#c5c5c5"/><rect x="0" y="5.5" width="9" height="1.1" fill="#c5c5c5"/><rect x="0" y="8.4" width="7" height="1.1" fill="#c5c5c5"/></svg>
<div class="t" style="left:52px;top:1px;line-height:22px;font-size:13px;color:#cccccc">uvm_barrier.svh</div>
<div class="t" style="left:152px;top:1px;line-height:22px;font-size:12px;letter-spacing:0.075px;color:#a9a9a9">~/.vscode/extensions/amiq.dvt-22.1.7/dvt_home/common/predefined_projects/libs/uvm-1.2/src/base</div>
<div class="b" style="left:699px;top:4px;width:24px;height:17px;border-radius:9px;background:#4d4d4d"></div>
<div class="t" style="left:703px;top:4px;line-height:17px;font-size:11px;color:#ffffff">4</div>
<div class="b" style="left:0;top:22px;width:709px;height:22px;background:#37373d"></div>
<svg class="i" style="left:44px;top:25px" width="16" height="16" viewBox="0 0 16 16"><path fill="#cca700" d="M7.56 1h.88l6.54 12.26-.44.74H1.44L1 13.26 7.56 1zM8 2.28L2.28 13H13.7L8 2.28zM8.625 12v-1h-1.25v1h1.25zm-1.25-2V6h1.25v4h-1.25z"/></svg>
<div class="t" style="left:66px;top:23px;line-height:22px;font-size:13px;color:#cccccc"><span style="letter-spacing:-0.41px">WIDTH_MISMATCH_PADDING:</span><span style="letter-spacing:0.2px"> Assignment to 'value' of '64-bit' …</span></div>
<div class="t" style="left:456px;top:23px;line-height:22px;font-size:13px;color:#a9a9a9">DVT(Verilog Semantic Warning)</div>
<div class="t" style="left:648px;top:23px;line-height:22px;font-size:13px;color:#a9a9a9">[189, 42]</div>
<svg class="i" style="left:44px;top:47px" width="16" height="16" viewBox="0 0 16 16"><path fill="#cca700" d="M7.56 1h.88l6.54 12.26-.44.74H1.44L1 13.26 7.56 1zM8 2.28L2.28 13H13.7L8 2.28zM8.625 12v-1h-1.25v1h1.25zm-1.25-2V6h1.25v4h-1.25z"/></svg>
<div class="t" style="left:66px;top:45px;line-height:22px;font-size:13px;color:#cccccc"><span style="letter-spacing:-0.41px">WIDTH_MISMATCH_PADDING:</span><span style="letter-spacing:0.2px"> Assignment to 'value' of '64-bit' …</span></div>
<div class="t" style="left:456px;top:45px;line-height:22px;font-size:13px;color:#a9a9a9">DVT(Verilog Semantic Warning)</div>
<div class="t" style="left:648px;top:45px;line-height:22px;font-size:13px;color:#a9a9a9">[190, 44]</div>
<svg class="i" style="left:44px;top:69px" width="16" height="16" viewBox="0 0 16 16"><path fill="#cca700" d="M7.56 1h.88l6.54 12.26-.44.74H1.44L1 13.26 7.56 1zM8 2.28L2.28 13H13.7L8 2.28zM8.625 12v-1h-1.25v1h1.25zm-1.25-2V6h1.25v4h-1.25z"/></svg>
<div class="t" style="left:66px;top:67px;line-height:22px;font-size:13px;color:#cccccc"><span style="letter-spacing:-0.41px">WIDTH_MISMATCH_PADDING:</span><span style="letter-spacing:0.2px"> Assignment to 'value' of '64-bit' …</span></div>
<div class="t" style="left:456px;top:67px;line-height:22px;font-size:13px;color:#a9a9a9">DVT(Verilog Semantic Warning)</div>
<div class="t" style="left:648px;top:67px;line-height:22px;font-size:13px;color:#a9a9a9">[191, 45]</div>
<svg class="i" style="left:44px;top:91px" width="16" height="16" viewBox="0 0 16 16"><path fill="#cca700" d="M7.56 1h.88l6.54 12.26-.44.74H1.44L1 13.26 7.56 1zM8 2.28L2.28 13H13.7L8 2.28zM8.625 12v-1h-1.25v1h1.25zm-1.25-2V6h1.25v4h-1.25z"/></svg>
<div class="t" style="left:66px;top:89px;line-height:22px;font-size:13px;color:#cccccc"><span style="letter-spacing:-0.41px">WIDTH_MISMATCH_PADDING:</span><span style="letter-spacing:0.2px"> Assignment to 'value' of '64-bit' …</span></div>
<div class="t" style="left:456px;top:89px;line-height:22px;font-size:13px;color:#a9a9a9">DVT(Verilog Semantic Warning)</div>
<div class="t" style="left:648px;top:89px;line-height:22px;font-size:13px;color:#a9a9a9">[192, 43]</div>
<div class="b" style="left:16px;top:22px;width:1px;height:88px;background:#585858"></div>
<svg class="i" style="left:11px;top:113px" width="16" height="16" viewBox="0 0 16 16"><path fill="#c5c5c5" d="M7.976 10.072l4.357-4.357.62.618L8.284 11h-.618L3 6.333l.619-.618 4.357 4.357z"/></svg>
<svg class="i" style="left:37px;top:117px" width="10" height="10" viewBox="0 0 10 10"><rect x="0" y="0.4" width="9" height="1.1" fill="#c5c5c5"/><rect x="0" y="2.9" width="5" height="1.1" fill="#c5c5c5"/><rect x="0" y="5.5" width="9" height="1.1" fill="#c5c5c5"/><rect x="0" y="8.4" width="7" height="1.1" fill="#c5c5c5"/></svg>
<div class="t" style="left:52px;top:111px;line-height:22px;font-size:13px;color:#cccccc">uvm_callback.svh</div>
<div class="t" style="left:159px;top:111px;line-height:22px;font-size:12px;letter-spacing:0.075px;color:#a9a9a9">~/.vscode/extensions/amiq.dvt-22.1.7/dvt_home/common/predefined_projects/libs/uvm-1.2/src/base</div>
<div class="b" style="left:706px;top:114px;width:24px;height:17px;border-radius:9px;background:#4d4d4d"></div>
<svg class="i" style="left:44px;top:135px" width="16" height="16" viewBox="0 0 16 16"><path fill="#cca700" d="M7.56 1h.88l6.54 12.26-.44.74H1.44L1 13.26 7.56 1zM8 2.28L2.28 13H13.7L8 2.28zM8.625 12v-1h-1.25v1h1.25zm-1.25-2V6h1.25v4h-1.25z"/></svg>
<div class="t" style="left:66px;top:133px;line-height:22px;font-size:13px;color:#cccccc"><span style="letter-spacing:-0.41px">WIDTH_MISMATCH_TRUNCATION:</span><span style="letter-spacing:0.2px"> Returning '$cast()' of '32-bit' …</span></div>
<div class="t" style="left:463px;top:133px;line-height:22px;font-size:13px;color:#a9a9a9">DVT(Verilog Semantic Warning)</div>
<div class="t" style="left:655px;top:133px;line-height:22px;font-size:13px;color:#a9a9a9">[204, 5]</div>
<svg class="i" style="left:44px;top:157px" width="16" height="16" viewBox="0 0 16 16"><path fill="#cca700" d="M7.56 1h.88l6.54 12.26-.44.74H1.44L1 13.26 7.56 1zM8 2.28L2.28 13H13.7L8 2.28zM8.625 12v-1h-1.25v1h1.25zm-1.25-2V6h1.25v4h-1.25z"/></svg>
<div class="t" style="left:66px;top:155px;line-height:22px;font-size:13px;color:#cccccc"><span style="letter-spacing:-0.41px">WIDTH_MISMATCH_TRUNCATION:</span><span style="letter-spacing:0.2px"> Assignment to 'warned' of '1-…</span></div>
<div class="t" style="left:463px;top:155px;line-height:22px;font-size:13px;color:#a9a9a9">DVT(Verilog Semantic Warning)</div>
<div class="t" style="left:655px;top:155px;line-height:22px;font-size:13px;color:#a9a9a9">[253, 8]</div>
<svg class="i" style="left:44px;top:179px" width="16" height="16" viewBox="0 0 16 16"><path fill="#cca700" d="M7.56 1h.88l6.54 12.26-.44.74H1.44L1 13.26 7.56 1zM8 2.28L2.28 13H13.7L8 2.28zM8.625 12v-1h-1.25v1h1.25zm-1.25-2V6h1.25v4h-1.25z"/></svg>
<div class="t" style="left:66px;top:177px;line-height:22px;font-size:13px;color:#cccccc"><span style="letter-spacing:-0.41px">WIDTH_MISMATCH_TRUNCATION:</span><span style="letter-spacing:0.2px"> Returning '$cast()' of '32-bit' …</span></div>
<div class="t" style="left:463px;top:177px;line-height:22px;font-size:13px;color:#a9a9a9">DVT(Verilog Semantic Warning)</div>
<div class="t" style="left:655px;top:177px;line-height:22px;font-size:13px;color:#a9a9a9">[569, 5]</div>
<svg class="i" style="left:11px;top:201px" width="16" height="16" viewBox="0 0 16 16"><path fill="#c5c5c5" d="M7.976 10.072l4.357-4.357.62.618L8.284 11h-.618L3 6.333l.619-.618 4.357 4.357z"/></svg>
<svg class="i" style="left:37px;top:205px" width="10" height="10" viewBox="0 0 10 10"><rect x="0" y="0.4" width="9" height="1.1" fill="#c5c5c5"/><rect x="0" y="2.9" width="5" height="1.1" fill="#c5c5c5"/><rect x="0" y="5.5" width="9" height="1.1" fill="#c5c5c5"/><rect x="0" y="8.4" width="7" height="1.1" fill="#c5c5c5"/></svg>
<div class="t" style="left:52px;top:199px;line-height:22px;font-size:13px;color:#cccccc">uvm_cmdline_processor.svh</div>
<div class="t" style="left:223px;top:199px;line-height:22px;font-size:12px;letter-spacing:0.075px;color:#a9a9a9">~/.vscode/extensions/amiq.dvt-22.1.7/dvt_home/common/predefined_projects/libs/uvm-1.2/src/base</div>
<svg class="i" style="left:44px;top:223px" width="16" height="16" viewBox="0 0 16 16"><path fill="#cca700" d="M7.56 1h.88l6.54 12.26-.44.74H1.44L1 13.26 7.56 1zM8 2.28L2.28 13H13.7L8 2.28zM8.625 12v-1h-1.25v1h1.25zm-1.25-2V6h1.25v4h-1.25z"/></svg>
<div class="t" style="left:66px;top:221px;line-height:22px;font-size:13px;color:#cccccc"><span style="letter-spacing:-0.41px">SYSTEM_VERILOG_2012:</span><span style="letter-spacing:0.2px"> Exception: 'modified by' 'UVM_CMDLINE_P…</span></div>
<div class="t" style="left:463px;top:221px;line-height:22px;font-size:13px;color:#a9a9a9">DVT(Verilog Syntax Warning)</div>
<div class="t" style="left:655px;top:221px;line-height:22px;font-size:13px;color:#a9a9a9">[160, 1]</div>
</div>
<svg class="i" style="left:16px;top:736px" width="14" height="14" viewBox="0 0 14 14"><circle cx="7" cy="7" r="5.8" fill="none" stroke="#fff" stroke-width="1.1"/><path d="M4.6 4.6 L9.4 9.4 M9.4 4.6 L4.6 9.4" stroke="#fff" stroke-width="1.1"/></svg>
<div class="t" style="left:32px;top:732px;height:22px;line-height:22px;font-size:12px;color:#ffffff;">0</div>
<svg class="i" style="left:40px;top:735px;" width="16" height="16" viewBox="0 0 16 16"><path fill="#ffffff" fill-rule="evenodd" d="M7.56 1h.88l6.54 12.26-.44.74H1.44L1 13.26 7.56 1zM8 2.28L2.28 13H13.7L8 2.28zM8.625 12v-1h-1.25v1h1.25zm-1.25-2V6h1.25v4h-1.25z"/></svg>
<div class="t" style="left:59px;top:732px;height:22px;line-height:22px;font-size:12px;color:#ffffff;">165</div>
<svg class="i" style="left:95px;top:736px" width="14" height="14" viewBox="0 0 14 14"><path d="M1 3.5 H13 M3.5 7 H10.5 M5.5 10.5 H8.5" stroke="#fff" stroke-width="1.1"/></svg>
<div class="t" style="left:112px;top:732px;height:22px;line-height:22px;font-size:12px;color:#ffffff;">Off</div>
<svg class="i" style="left:414px;top:735px;" width="16" height="16" viewBox="0 0 16 16"><path fill="#ffffff" fill-rule="evenodd" d="M9.1 4.4L8.6 2H7.4l-.5 2.4-.7.3-2-1.3-.9.8 1.3 2-.2.7-2.4.5v1.2l2.4.5.3.8-1.3 2 .8.8 2-1.3.8.3.4 2.3h1.2l.5-2.4.8-.3 2 1.3.8-.8-1.3-2 .3-.8 2.3-.4V7.4l-2.4-.5-.3-.8 1.3-2-.8-.8-2 1.3-.7-.2zM9.4 1l.5 2.4L12 2.1l2 2-1.4 2.1 2.4.4v2.8l-2.4.5L14 12l-2 2-2.1-1.4-.5 2.4H6.6l-.5-2.4L4 13.9l-2-2 1.4-2.1L1 9.4V6.6l2.4-.5L2.1 4l2-2 2.1 1.4.4-2.4h2.8zm.6 7c0 1.1-.9 2-2 2s-2-.9-2-2 .9-2 2-2 2 .9 2 2zM8 9c.6 0 1-.4 1-1s-.4-1-1-1-1 .4-1 1 .4 1 1 1z"/></svg>
<div class="t" style="left:432px;top:732px;height:22px;line-height:22px;font-size:12px;color:#ffffff;letter-spacing:-0.1px;">uvm-1.2_ubus</div>
<svg class="i" style="left:511px;top:737px" width="12" height="12" viewBox="0 0 12 12"><path d="M0.5 6 H11 M6.5 1.5 L11 6 L6.5 10.5" fill="none" stroke="#fff" stroke-width="1.1"/></svg>
<div class="t" style="left:527px;top:732px;height:22px;line-height:22px;font-size:12px;color:#ffffff;letter-spacing:0.3px;">default</div>
<div class="b" style="left:583px;top:737px;width:13px;height:13px;border-radius:50%;background:#fff"></div>
<div class="t" style="left:612px;top:732px;height:22px;line-height:22px;font-size:12px;color:#ffffff;letter-spacing:-0.2px;">Ln 30, Col 16</div>
<div class="t" style="left:697px;top:732px;height:22px;line-height:22px;font-size:12px;color:#ffffff;letter-spacing:-0.45px;">Spaces: 2</div>
<div class="t" style="left:763px;top:732px;height:22px;line-height:22px;font-size:12px;color:#ffffff;letter-spacing:-0.5px;">UTF-8</div>
<div class="t" style="left:810px;top:732px;height:22px;line-height:22px;font-size:12px;color:#ffffff;letter-spacing:-0.5px;">LF</div>
<div class="t" style="left:839px;top:732px;height:22px;line-height:22px;font-size:12px;color:#ffffff;letter-spacing:0.1px;">SystemVerilog</div>
<svg class="i" style="left:934px;top:736px" width="15" height="15" viewBox="0 0 15 15"><circle cx="5.5" cy="7" r="2.6" fill="none" stroke="#fff" stroke-width="1"/><path d="M1 14 C1.5 11 3.5 10 5.5 10 C7.5 10 9.5 11 10 14" fill="none" stroke="#fff" stroke-width="1"/><path d="M6 3 V1 H14 V7 H11 L9.5 8.5" fill="none" stroke="#fff" stroke-width="1"/></svg>
<svg class="i" style="left:964px;top:736px" width="16" height="15" viewBox="0 0 16 15"><path d="M2 12.5 H12 L10.8 10.5 V6.5 C10.8 4.2 9.2 2.6 7 2.6 C4.8 2.6 3.2 4.2 3.2 6.5 V10.5 Z M5.5 13 C5.8 14 6.3 14.4 7 14.4 C7.7 14.4 8.2 14 8.5 13" fill="none" stroke="#fff" stroke-width="1"/><circle cx="12" cy="3.5" r="2.6" fill="#fff"/></svg>
</body></html>
